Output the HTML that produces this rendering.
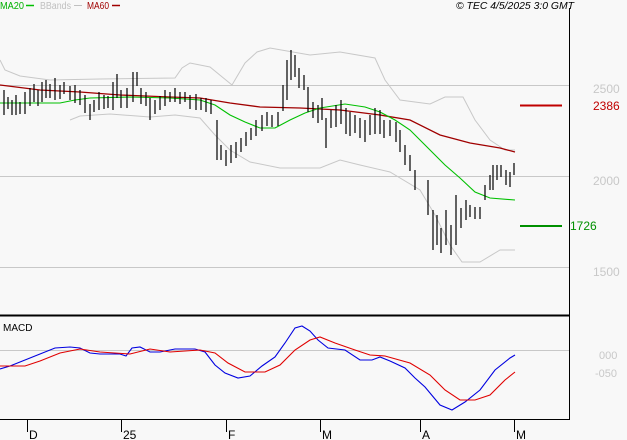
<!DOCTYPE html>
<html><head><meta charset="utf-8"><style>
html,body{margin:0;padding:0;background:#f8f8f8;width:627px;height:440px;overflow:hidden}
svg{display:block;font-family:"Liberation Sans",sans-serif}
</style></head><body>
<svg width="627" height="440" viewBox="0 0 627 440">
<rect width="627" height="440" fill="#f8f8f8"/>
<g stroke="#c8c8c8" stroke-width="1">
<line x1="0" y1="85.5" x2="569" y2="85.5"/>
<line x1="0" y1="176.5" x2="569" y2="176.5"/>
<line x1="0" y1="267.5" x2="569" y2="267.5"/>
<line x1="0" y1="350.5" x2="569" y2="350.5"/>
</g>
<line x1="569.5" y1="8" x2="569.5" y2="419" stroke="#000"/>
<line x1="0" y1="315.5" x2="570" y2="315.5" stroke="#000" stroke-width="2"/>
<line x1="0" y1="419.5" x2="570" y2="419.5" stroke="#000"/>
<g stroke="#000"><line x1="27.5" y1="419" x2="27.5" y2="432"/><line x1="121.5" y1="419" x2="121.5" y2="432"/><line x1="226.5" y1="419" x2="226.5" y2="432"/><line x1="320.5" y1="419" x2="320.5" y2="432"/><line x1="420.5" y1="419" x2="420.5" y2="432"/><line x1="514.5" y1="419" x2="514.5" y2="432"/></g>
<g font-size="12" fill="#000"><text x="29" y="439">D</text><text x="123" y="439">25</text><text x="228" y="439">F</text><text x="322" y="439">M</text><text x="422" y="439">A</text><text x="516" y="439">M</text></g>
<g font-size="10"><text x="0" y="9" fill="#00b000" textLength="24" lengthAdjust="spacingAndGlyphs">MA20</text><line x1="26" y1="5.5" x2="34" y2="5.5" stroke="#00c000" stroke-width="1.5"/>
<text x="40" y="9" fill="#c0c0c0" textLength="31" lengthAdjust="spacingAndGlyphs">BBands</text><line x1="74" y1="5.5" x2="82" y2="5.5" stroke="#c0c0c0"/>
<text x="87" y="9" fill="#a00000" textLength="22" lengthAdjust="spacingAndGlyphs">MA60</text><line x1="112" y1="5.5" x2="120" y2="5.5" stroke="#a00000" stroke-width="1.5"/>
<text x="456" y="9" fill="#000" font-style="italic" textLength="118" lengthAdjust="spacingAndGlyphs">© TEC 4/5/2025 3:0 GMT</text></g>
<g font-size="12" fill="#c8c8c8"><text x="593" y="93">2500</text><text x="593" y="185">2000</text><text x="593" y="276">1500</text><text x="599" y="359" font-size="11">000</text><text x="595" y="377" font-size="11">-050</text></g>
<line x1="520" y1="105.5" x2="562" y2="105.5" stroke="#c00000" stroke-width="2"/>
<text x="593" y="110" font-size="12" fill="#c00000">2386</text>
<line x1="520" y1="226" x2="562" y2="226" stroke="#009000" stroke-width="2"/>
<text x="570" y="230" font-size="12" fill="#009000">1726</text>
<g fill="none" stroke="#c8c8c8" stroke-width="1">
<polyline points="0,60 5,70 20,76 50,80 100,79 175,78 182,68 190,63 210,67 232,85 245,63 257,52 270,48 310,55 340,52 375,58 385,80 400,100 430,104 445,97 463,97 475,120 490,140 505,150 515,150"/>
<polyline points="70,120 80,116 110,114 150,117 175,115 200,118 215,135 230,150 250,162 280,168 320,168 340,160 360,165 390,172 420,190 435,215 450,245 462,262 480,262 500,250 515,250"/>
</g>
<polyline fill="none" stroke="#a00000" stroke-width="1.3" points="0,85 40,90 80,92 120,95 170,97 200,98 230,103 260,107 300,108 340,110 380,115 410,120 440,135 470,143 500,148 515,152"/>
<polyline fill="none" stroke="#00c000" stroke-width="1.1" points="0,103 60,103 75,100 90,98 130,97 170,98 200,100 215,105 230,115 245,122 260,128 275,128 290,120 305,113 320,108 345,104 365,107 380,112 395,120 410,130 430,150 445,165 460,178 475,192 490,198 515,200"/>
<g stroke="#000" stroke-width="1.2">
<path d="M4 90v25M8 97v12M12 100v15M16 95v20M20 102v12M25 92v22M30 88v18M34 84v18M38 90v16M42 82v20M46 80v18M50 84v14M55 78v22M60 85v14M64 82v12M70 86v14M75 85v18M80 90v15M85 95v18M90 104v16M94 100v12M99 92v18M104 95v14M108 96v12M113 82v28M117 74v24M121 90v18M127 88v20M133 72v30M137 72v14M141 88v16M146 92v14M150 98v22M155 100v14M160 96v14M165 90v16M170 92v10M175 88v14M180 92v12M185 92v10M190 95v14M196 94v16M201 98v12M206 98v14M211 100v14M217 120v40M221 145v15M226 150v16M231 145v18M236 142v16M241 138v14M246 132v14M251 128v12M256 120v16M262 115v16M267 112v14M272 115v12M278 112v14M283 85v26M287 60v40M291 50v30M295 55v22M299 68v20M304 75v15M308 87v25M313 102v16M318 105v18M322 98v22M326 118v30M331 110v18M336 105v22M341 100v24M346 108v26M350 112v24M355 115v18M360 118v20M365 120v22M370 115v20M375 108v26M380 110v24M384 120v18M390 120v16M396 122v20M400 130v22M405 145v20M410 155v16M415 170v20M428 180v35M433 210v40M437 215v30M441 228v25M446 210v35M451 225v30M456 195v50M461 208v20M466 200v20M470 205v12M475 207v12M480 207v12M485 185v15M490 175v15M493 165v25M497 165v15M501 165v12M506 170v15M510 172v15M514 163v12"/>
</g>
<text x="3" y="331" font-size="10" fill="#000">MACD</text>
<polyline fill="none" stroke="#0000e0" stroke-width="1.1" points="0,369 10,366 25,360 40,354 55,348 70,347 80,348 90,353 100,354 120,354 126,356 132,348 140,347 150,352 160,352 175,349 195,349 205,352 215,365 225,373 238,378 250,376 262,366 275,357 285,343 295,328 302,326 310,331 318,340 328,348 345,350 360,360 372,360 380,357 390,361 405,368 415,378 425,387 440,405 452,410 465,402 480,390 495,370 510,358 515,355"/>
<polyline fill="none" stroke="#e00000" stroke-width="1.1" points="0,366 25,366 40,361 60,353 80,349 100,352 130,354 150,349 170,352 200,350 215,353 228,363 245,372 265,372 280,365 295,350 310,340 320,337 335,343 355,350 370,355 385,356 410,363 430,375 445,390 460,400 475,400 490,395 505,380 515,372"/>
</svg>
</body></html>
